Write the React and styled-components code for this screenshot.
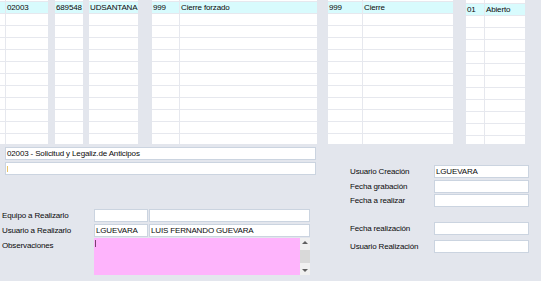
import React from "react";
import styled, { createGlobalStyle } from "styled-components";

const GlobalStyle = createGlobalStyle`
  html, body {
    margin: 0;
    padding: 0;
    background: #e3e6ed;
  }
  body {
    font-family: "Liberation Sans", Arial, sans-serif;
    font-size: 8px;
    letter-spacing: -0.15px;
    color: #0a0a0a;
  }
`;

const Page = styled.div`
  width: 541px;
  height: 281px;
  overflow: hidden;
  display: flex;
  flex-direction: column;
`;

const GridStrip = styled.div`
  display: flex;
  height: 144px;
  align-items: flex-start;
`;

const Grid = styled.div`
  width: ${p => p.$width}px;
  height: 144px;
  margin-left: ${p => p.$ml || 0}px;
  background: #fff;
  overflow: hidden;
  display: flex;
  flex-direction: column;
`;

const Row = styled.div`
  display: flex;
  flex: none;
  height: ${p => p.$h || 11}px;
  border-bottom: 1px solid #e6e8ee;
  background: ${p => (p.$selected ? "#d8fbfd" : "#fff")};
`;

const Cell = styled.div`
  width: ${p => p.$w}px;
  flex: none;
  padding-left: 1px;
  box-sizing: border-box;
  line-height: 11px;
  white-space: nowrap;
  overflow: hidden;
  border-right: 1px solid #e6e8ee;

  &:last-child {
    border-right: none;
  }
`;

const BottomArea = styled.div`
  display: flex;
  flex: 1;
`;

const LeftPanel = styled.div`
  width: 318px;
  padding-left: 2px;
  display: flex;
  flex-direction: column;
`;

const TopFields = styled.div`
  padding-left: 3px;
  margin-top: 3px;
  display: flex;
  flex-direction: column;
  gap: 2px;
`;

const Field = styled.div`
  position: relative;
  box-sizing: border-box;
  width: ${p => p.$w}px;
  height: 13px;
  border: 1px solid #cbd4e0;
  background: #fff;
  padding-left: 1px;
  line-height: 11px;
  white-space: nowrap;
  overflow: hidden;
`;

const Caret = styled.span`
  position: absolute;
  left: 1px;
  top: ${p => p.$top || 3}px;
  width: 1px;
  height: ${p => p.$h || 6}px;
  background: ${p => p.$color};
`;

const Form = styled.div`
  margin-top: 34px;
  display: grid;
  grid-template-columns: 91px 54px 161px;
  grid-auto-rows: 13px;
  column-gap: 1px;
  row-gap: 2px;
`;

const Label = styled.div`
  line-height: 13px;
  white-space: nowrap;
`;

const Observaciones = styled.div`
  grid-column: 2 / span 2;
  height: 37px;
  margin-top: -1px;
  display: flex;
`;

const PinkArea = styled.div`
  position: relative;
  flex: 1;
  background: #feb4fc;
`;

const ScrollBar = styled.div`
  width: 10px;
  background: #f0f0f0;
  display: flex;
  flex-direction: column;
  align-items: center;
  justify-content: space-between;
  padding: 3px 0;
  box-sizing: border-box;
`;

const Thumb = styled.div`
  width: 10px;
  height: 13px;
  background: #d9d9d9;
`;

const Arrow = styled.div`
  width: 0;
  height: 0;
  border-left: 3px solid transparent;
  border-right: 3px solid transparent;
  ${p =>
    p.$down
      ? "border-top: 3px solid #606060;"
      : "border-bottom: 3px solid #606060;"}
`;

const RightPanel = styled.div`
  padding-left: 30px;
  padding-top: 21px;
  display: flex;
  flex-direction: column;
`;

const InfoRow = styled.div`
  display: grid;
  grid-template-columns: 84px 95px;
  margin-top: ${p => p.$mt || 0}px;
  height: 13px;
`;

const grids = [
  { width: 48, ml: 0, cols: [6, 42], data: ["", "02003"], top: 1 },
  { width: 28, ml: 7, cols: [28], data: ["689548"], top: 1 },
  { width: 49, ml: 6, cols: [49], data: ["UDSANTANA"], top: 1 },
  { width: 165, ml: 14, cols: [28, 137], data: ["999", "Cierre forzado"], top: 1 },
  { width: 125, ml: 11, cols: [35, 90], data: ["999", "Cierre"], top: 1 },
  { width: 59, ml: 13, cols: [19, 40], data: ["01", "Abierto"], top: 3 }
];

const info = [
  { label: "Usuario Creación", value: "LGUEVARA", mt: 0 },
  { label: "Fecha grabación", value: "", mt: 2 },
  { label: "Fecha a realizar", value: "", mt: 1 },
  { label: "Fecha realización", value: "", mt: 15 },
  { label: "Usuario Realización", value: "", mt: 5 }
];

const App = () => {
  return (
    <Page>
      <GlobalStyle />
      <GridStrip>
        {grids.map((g, i) => (
          <Grid key={i} $width={g.width} $ml={g.ml}>
            <Row $h={g.top}>
              {g.cols.map((w, j) => (
                <Cell key={j} $w={w} />
              ))}
            </Row>
            <Row $selected>
              {g.cols.map((w, j) => (
                <Cell key={j} $w={w}>
                  {g.data[j]}
                </Cell>
              ))}
            </Row>
            {Array.from({ length: 11 }).map((_, r) => (
              <Row key={r}>
                {g.cols.map((w, j) => (
                  <Cell key={j} $w={w} />
                ))}
              </Row>
            ))}
          </Grid>
        ))}
      </GridStrip>

      <BottomArea>
        <LeftPanel>
          <TopFields>
            <Field $w={311}>02003 - Solicitud y Legaliz.de Anticipos</Field>
            <Field $w={311}>
              <Caret $color="#e9c46a" />
            </Field>
          </TopFields>

          <Form>
            <Label>Equipo a Realizarlo</Label>
            <Field $w={54} />
            <Field $w={161} />
            <Label>Usuario a Realizarlo</Label>
            <Field $w={54}>LGUEVARA</Field>
            <Field $w={161}>LUIS FERNANDO GUEVARA</Field>
            <Label>Observaciones</Label>
            <Observaciones>
              <PinkArea>
                <Caret $color="#7a4070" $top={2} $h={7} />
              </PinkArea>
              <ScrollBar>
                <Arrow />
                <Thumb />
                <Arrow $down />
              </ScrollBar>
            </Observaciones>
          </Form>
        </LeftPanel>

        <RightPanel>
          {info.map(r => (
            <InfoRow key={r.label} $mt={r.mt}>
              <Label>{r.label}</Label>
              <Field $w={95}>{r.value}</Field>
            </InfoRow>
          ))}
        </RightPanel>
      </BottomArea>
    </Page>
  );
};

export default App;
